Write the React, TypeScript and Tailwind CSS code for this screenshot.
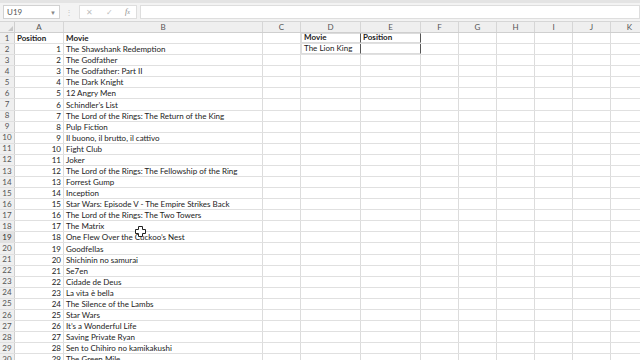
import React from 'react';

const movies = [
  'The Shawshank Redemption',
  'The Godfather',
  'The Godfather: Part II',
  'The Dark Knight',
  '12 Angry Men',
  'Schindler’s List',
  'The Lord of the Rings: The Return of the King',
  'Pulp Fiction',
  'Il buono, il brutto, il cattivo',
  'Fight Club',
  'Joker',
  'The Lord of the Rings: The Fellowship of the Ring',
  'Forrest Gump',
  'Inception',
  'Star Wars: Episode V - The Empire Strikes Back',
  'The Lord of the Rings: The Two Towers',
  'The Matrix',
  'One Flew Over the Cuckoo’s Nest',
  'Goodfellas',
  'Shichinin no samurai',
  'Se7en',
  'Cidade de Deus',
  'La vita è bella',
  'The Silence of the Lambs',
  'Star Wars',
  'It’s a Wonderful Life',
  'Saving Private Ryan',
  'Sen to Chihiro no kamikakushi',
  'The Green Mile',
];

const cols = [
  { key: 'A', w: 'w-[49px]' },
  { key: 'B', w: 'w-[199px]' },
  { key: 'C', w: 'w-[38px]' },
  { key: 'D', w: 'w-[60px]' },
  { key: 'E', w: 'w-[60px]' },
  { key: 'F', w: 'w-[38px]' },
  { key: 'G', w: 'w-[38px]' },
  { key: 'H', w: 'w-[38px]' },
  { key: 'I', w: 'w-[38px]' },
  { key: 'J', w: 'w-[38px]' },
  { key: 'K', w: 'w-[38px]' },
];

function CrossCursor() {
  return (
    <svg width="11" height="11" viewBox="0 0 11 11" className="absolute left-[135px] top-[226px]">
      <path d="M3.5 0.5h4v3h3v4h-3v3h-4v-3h-3v-4h3z" fill="#fff" stroke="#222" strokeWidth="1" />
    </svg>
  );
}

function Cell({ w, children, bold, right, className = '' }: any) {
  return (
    <div
      className={`${w} shrink-0 h-full border-r border-[#dcdcdc] flex items-end px-[2px] whitespace-nowrap overflow-visible ${right ? 'justify-end' : ''} ${bold ? 'font-bold' : ''} ${className}`}
    >
      <span className="leading-[9px]">{children}</span>
    </div>
  );
}

export default function App() {
  const rows = Array.from({ length: 30 }, (_, i) => i + 1);

  return (
    <div className="relative w-[640px] h-[360px] overflow-hidden bg-white text-[#222] text-[8px] font-['Lato','Open_Sans',sans-serif]">
      {/* formula bar */}
      <div className="h-[22px] bg-[#f3f3f3] border-t-[3px] border-[#e4e4e4] flex items-center pl-[3px] border-b border-b-[#d6d6d6]">
        <div className="w-[57px] h-[14px] bg-white border border-[#d2d2d2] flex items-center justify-between px-[3px] text-[#555]">
          <span>U19</span>
          <span className="text-[6px] text-[#888]">▼</span>
        </div>
        <span className="text-[#c4c4c4] text-[8px] ml-[5px] mr-[6px]">⋮</span>
        <div className="w-[58px] h-[14px] bg-white border border-[#dedede] flex items-center justify-around text-[#c0c0c0] text-[8px]">
          <span>✕</span>
          <span>✓</span>
          <span className="italic font-['Liberation_Serif',serif] text-[#888]">f<span className="text-[6px]">x</span></span>
        </div>
        <div className="flex-1 h-[14px] ml-[3px] bg-white border border-[#dedede]" />
      </div>

      {/* column headers */}
      <div className="flex h-[11px] bg-[#efefef] border-b border-[#cfcfcf] text-[#555]">
        <div className="w-[15px] shrink-0 border-r border-[#cfcfcf] flex items-end justify-end p-[1px]">
          <svg width="5" height="5" viewBox="0 0 5 5"><path d="M5 0V5H0z" fill="#c8c8c8" /></svg>
        </div>
        {cols.map((c) => (
          <div key={c.key} className={`${c.w} shrink-0 border-r border-[#d6d6d6] flex items-center justify-center`}>
            {c.key}
          </div>
        ))}
      </div>

      {/* rows */}
      {rows.map((r) => {
        const movie = r === 1 ? 'Movie' : movies[r - 2];
        const pos = r === 1 ? 'Position' : String(r - 1);
        return (
          <div key={r} className="flex h-[11.08px] border-b border-[#e0e0e0]">
            <div className={`w-[15px] shrink-0 border-r border-[#cfcfcf] flex items-end justify-center leading-[9.5px] ${r === 19 ? 'bg-[#e2e2e2] text-[#333]' : 'bg-[#efefef] text-[#555]'}`}>
              {r}
            </div>
            <Cell w="w-[49px]" bold={r === 1} right={r !== 1}>{pos}</Cell>
            <Cell w="w-[199px]" bold={r === 1}>{movie}</Cell>
            <Cell w="w-[38px]" />
            {r === 1 && (
              <>
                <Cell w="w-[60px]" bold className="border-l border-t border-b border-[#555] border-r-[#555]">Movie</Cell>
                <Cell w="w-[60px]" bold className="border-t border-b border-[#555] border-r-[#555]">Position</Cell>
              </>
            )}
            {r === 2 && (
              <>
                <Cell w="w-[60px]" className="border-l border-b border-[#555] border-r-[#555]">The Lion King</Cell>
                <Cell w="w-[60px]" className="border-b border-[#555] border-r-[#555]" />
              </>
            )}
            {r > 2 && (
              <>
                <Cell w="w-[60px]" />
                <Cell w="w-[60px]" />
              </>
            )}
            {cols.slice(5).map((c) => (
              <Cell key={c.key} w={c.w} />
            ))}
          </div>
        );
      })}

      <CrossCursor />
    </div>
  );
}
